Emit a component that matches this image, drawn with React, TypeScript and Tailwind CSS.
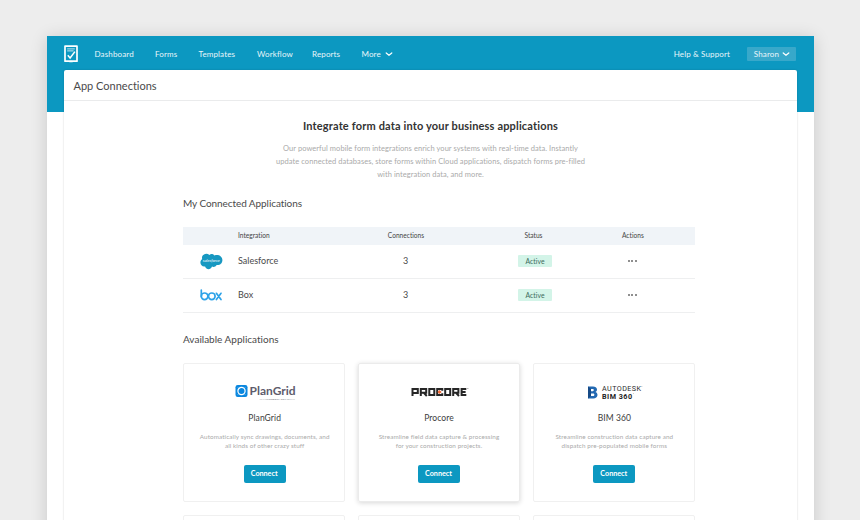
import type { ReactNode } from 'react';

const NAV = [
  { label: 'Dashboard', width: 'w-[60.5px]' },
  { label: 'Forms', width: 'w-[43.5px]' },
  { label: 'Templates', width: 'w-[58.5px]' },
  { label: 'Workflow', width: 'w-[55px]' },
  { label: 'Reports', width: 'w-[49.5px]' },
];

function Chevron() {
  return (
    <svg width="8" height="6" viewBox="0 0 8 6" fill="none" stroke="white" strokeWidth="1.2" strokeLinecap="round" strokeLinejoin="round">
      <path d="M1.2 2 L4 4.3 L6.8 2" />
    </svg>
  );
}

function FormLogo() {
  return (
    <svg width="14" height="18" viewBox="0 0 14 18" fill="none" stroke="white">
      <path d="M1 1.2 H13 V16.2 H1 Z" strokeWidth="1.7" strokeLinejoin="round" />
      <path d="M5.2 17.3 L7 15.6 L8.8 17.3 Z" fill="white" stroke="none" />
      <path d="M3.2 3.9 H10.8 M3.2 5.9 H9.6" strokeWidth="0.9" strokeOpacity="0.85" />
      <path d="M3.8 10.3 L6.1 13 L10.9 6.6" strokeWidth="1.5" />
    </svg>
  );
}

function SalesforceLogo() {
  return (
    <svg width="23" height="17" viewBox="0 0 23 17">
      <path
        d="M9.4 1.9 C10.8 .5 13.2 .7 14.5 2.5 C18.4 1 22.5 3.4 22.4 7.2 C22.3 10.6 19.5 12.4 16.7 12 C15.7 13.8 13.6 14.3 12 13.6 C10.4 17.2 6.4 17 5.1 13.4 C2.4 13.9 .4 12 .4 9.5 C.4 8 1.1 6.8 2.2 6 C.8 1.9 6.2 -1.2 9.4 1.9 Z"
        fill="#1798c1"
      />
      <text x="11.3" y="9.1" textAnchor="middle" fontFamily="Lato, sans-serif" fontStyle="italic" fontSize="4.4" textLength="17" lengthAdjust="spacingAndGlyphs" fill="white">
        salesforce
      </text>
    </svg>
  );
}

function BoxLogo() {
  return (
    <svg width="23" height="12" viewBox="0 0 23 12" fill="none" stroke="#2ea3e8" strokeWidth="1.7" strokeLinecap="round">
      <path d="M1.3 1 V7.5" />
      <circle cx="4.6" cy="7.3" r="3.3" />
      <circle cx="11.8" cy="7.3" r="3.3" />
      <path d="M16.4 4.3 L21 10.5 M21 4.3 L16.4 10.5" />
    </svg>
  );
}

function PlanGridLogo() {
  return (
    <svg width="62" height="17" viewBox="0 0 62 17">
      <rect x="0.5" y="1" width="12" height="12" rx="2.2" fill="#0a87df" />
      <circle cx="6.5" cy="7" r="3.6" fill="none" stroke="white" strokeWidth="1.2" />
      <path d="M3 3.5 L4 4.5 M10 3.5 L9 4.5 M3 10.5 L4 9.5 M10 10.5 L9 9.5" stroke="white" strokeWidth="0.6" />
      <text x="14.6" y="11.2" fontFamily="Lato, sans-serif" fontWeight="700" fontSize="12.2" textLength="46" lengthAdjust="spacingAndGlyphs" fill="#5d5c6c">
        PlanGrid
      </text>
      <text x="24.5" y="15.6" fontFamily="Lato, sans-serif" fontSize="2.6" textLength="35.5" lengthAdjust="spacingAndGlyphs" fill="#77777f">
        AN AUTODESK COMPANY
      </text>
    </svg>
  );
}

function ProcoreLogo() {
  return (
    <svg width="58" height="14" viewBox="0 0 58 14" fill="none" stroke="#262626" strokeWidth="2">
      <path d="M1.5 9 V2 H6.8 V6 H1.5" />
      <path d="M9.8 9 V2 H15.2 V5.8 H9.8 M12.8 5.8 L15.8 9" />
      <path d="M18.3 2 H23.3 V8 H18.3 Z" />
      <path d="M31.3 3.7 V2 H26.2 V8 H31.3 V6.3" />
      <path d="M34.2 2 H39.2 V8 H34.2 Z" />
      <path d="M42.2 9 V2 H47.4 V5.8 H42.2 M45 5.8 L48 9" />
      <path d="M55.3 2 H50.6 V8 H55.3 M50.6 5 H54.6" />
      <path d="M28.5 2.9 L30.6 5 L28.5 7.1 L26.4 5 Z" fill="#f26a36" stroke="none" />
      <circle cx="56.9" cy="1.6" r="0.5" fill="#777" stroke="none" />
    </svg>
  );
}

function BimLogo() {
  return (
    <svg width="56" height="16" viewBox="0 0 56 16">
      <path d="M1 1.5 H6 C10.7 1.5 11 6.1 8.4 7.1 C11.7 8.2 11.2 13.5 6.4 13.5 H1 Z M4 4 V6.2 H5.8 C7.2 6.2 7.2 4 5.8 4 Z M4 8.5 V11.1 H6.1 C7.8 11.1 7.8 8.5 6.1 8.5 Z" fill="#2369b2" fillRule="evenodd" />
      <path d="M1 1.5 L4 4 V11.1 L1 13.5 Z" fill="#174a86" />
      <text x="15" y="6.2" fontFamily="Roboto, sans-serif" fontSize="7.2" textLength="39" fill="#2b2b2b">
        AUTODESK
      </text>
      <text x="15" y="13.6" fontFamily="Roboto, sans-serif" fontWeight="700" fontSize="7.2" textLength="30" fill="#222222">
        BIM 360
      </text>
      <circle cx="54.9" cy="1.5" r="0.4" fill="#777" />
      <circle cx="46.3" cy="8.7" r="0.4" fill="#777" />
    </svg>
  );
}

function Row({ logo, name }: { logo: ReactNode; name: string }) {
  return (
    <div className="grid h-[34px] grid-cols-[55px_112px_111px_147px_1fr] items-center border-b border-[#eeeff0] pb-[1.5px] text-[9px] text-[#4a4a4a]">
      <div className="pl-[17px]">{logo}</div>
      <div>{name}</div>
      <div className="text-center">3</div>
      <div className="flex justify-center">
        <span className="flex h-3 w-[34px] items-center justify-center rounded-[1px] bg-[#d3f4e8] pl-px text-[6.8px] tracking-[0.05px] text-[#3b6b5b]">Active</span>
      </div>
      <div className="flex gap-[1.2px] pl-[20.3px]">
        <i className="size-[2px] rounded-full bg-[#6a6a6a]" />
        <i className="size-[2px] rounded-full bg-[#6a6a6a]" />
        <i className="size-[2px] rounded-full bg-[#6a6a6a]" />
      </div>
    </div>
  );
}

function AppCard({ logo, name, lines, raised }: { logo: ReactNode; name: string; lines: string[]; raised?: boolean }) {
  return (
    <div
      className={
        raised
          ? 'flex h-[139px] flex-col items-center rounded-[2px] border border-[#ebebeb] shadow-[0_1px_5px_rgba(0,0,0,0.16)]'
          : 'flex h-[139px] flex-col items-center rounded-[2px] border border-[#f0f0f0] pl-px'
      }
    >
      <div className="flex h-[37px] items-end pl-[2px]">{logo}</div>
      <div className="mt-[10.5px] text-[8.5px] leading-3 tracking-[0.08px] text-[#3c3c3c]">{name}</div>
      <div className="mt-[9.5px] text-center text-[6.3px] leading-[8.7px] tracking-[0.11px] text-[#aaaaaa]">
        {lines.map((line) => (
          <div key={line} className="whitespace-nowrap">{line}</div>
        ))}
      </div>
      <button className="mt-[14px] flex h-[18px] w-[42px] items-center justify-center rounded-[2px] bg-[#0c98c1] pt-px pr-px text-[7.2px] font-bold text-white">
        Connect
      </button>
    </div>
  );
}

export default function App() {
  return (
    <div className="h-[520px] w-[860px] overflow-hidden bg-[#ededed] pt-9 pl-[47px] font-['Lato',sans-serif] [font-variant-ligatures:none]">
      <div className="h-[520px] w-[767px] bg-white shadow-[0_2px_16px_rgba(0,0,0,0.16)]">
        <header className="h-[75.5px] bg-[#0c98c1] pl-[17px]">
          <div className="flex h-[36px] items-center text-[8px] tracking-[0.14px] text-[#e9f6fa]">
            <div className="w-[30.5px]"><FormLogo /></div>
            {NAV.map((item) => (
              <a key={item.label} className={item.width}>{item.label}</a>
            ))}
            <a className="flex items-center gap-1">More <Chevron /></a>
            <a className="ml-auto">Help &amp; Support</a>
            <button className="mr-[18px] ml-[17px] flex h-[14px] w-[49px] items-center justify-center gap-[3px] rounded-[1px] bg-[#38a8ca] pl-px">
              Sharon <Chevron />
            </button>
          </div>
        </header>
        <main className="-mt-[41.5px] ml-[17px] h-[500px] w-[733px] rounded-[2px] bg-white shadow-[0_0_2px_rgba(0,0,0,0.2)]">
          <h1 className="flex h-[31px] items-center border-b border-[#eaebec] pt-[2px] pl-[9.5px] text-[11px] text-[#4a4a4a]">App Connections</h1>
          <div className="ml-[119px] w-[512px]">
            <section className="pt-[17px] pr-[17px] text-center">
              <h2 className="text-[11px] leading-4 font-bold tracking-[0.16px] text-[#333333]">Integrate form data into your business applications</h2>
              <p className="mt-[9px] text-[7.5px] leading-[12.8px] tracking-[0.06px] text-[#aaaaaa]">
                Our powerful mobile form integrations enrich your systems with real-time data. Instantly
                <br />
                update connected databases, store forms within Cloud applications, dispatch forms pre-filled
                <br />
                with integration data, and more.
              </p>
            </section>
            <h3 className="mt-[14px] text-[10px] leading-4 tracking-[-0.07px] text-[#4a4a4a]">My Connected Applications</h3>
            <div className="mt-[16px]">
              <div className="grid h-[18px] grid-cols-[55px_112px_111px_147px_1fr] items-center bg-[#f0f4f8] text-[6.6px] text-[#444]">
                <div />
                <div>Integration</div>
                <div className="pl-px text-center">Connections</div>
                <div className="pr-[2px] text-center">Status</div>
                <div className="pl-[14px]">Actions</div>
              </div>
              <Row logo={<SalesforceLogo />} name="Salesforce" />
              <Row logo={<BoxLogo />} name="Box" />
            </div>
            <h3 className="mt-[18px] text-[10px] leading-4 text-[#4a4a4a]">Available Applications</h3>
            <div className="mt-4 grid grid-cols-3 gap-x-[12.5px] gap-y-[12.5px]">
              <AppCard logo={<PlanGridLogo />} name="PlanGrid" lines={['Automatically sync drawings, documents, and', 'all kinds of other crazy stuff']} />
              <AppCard logo={<ProcoreLogo />} name="Procore" lines={['Streamline field data capture & processing', 'for your construction projects.']} raised />
              <AppCard logo={<BimLogo />} name="BIM 360" lines={['Streamline construction data capture and', 'dispatch pre-populated mobile forms']} />
              <div className="h-10 rounded-[2px] border border-[#f0f0f0]" />
              <div className="h-10 rounded-[2px] border border-[#f0f0f0]" />
              <div className="h-10 rounded-[2px] border border-[#f0f0f0]" />
            </div>
          </div>
        </main>
      </div>
    </div>
  );
}
